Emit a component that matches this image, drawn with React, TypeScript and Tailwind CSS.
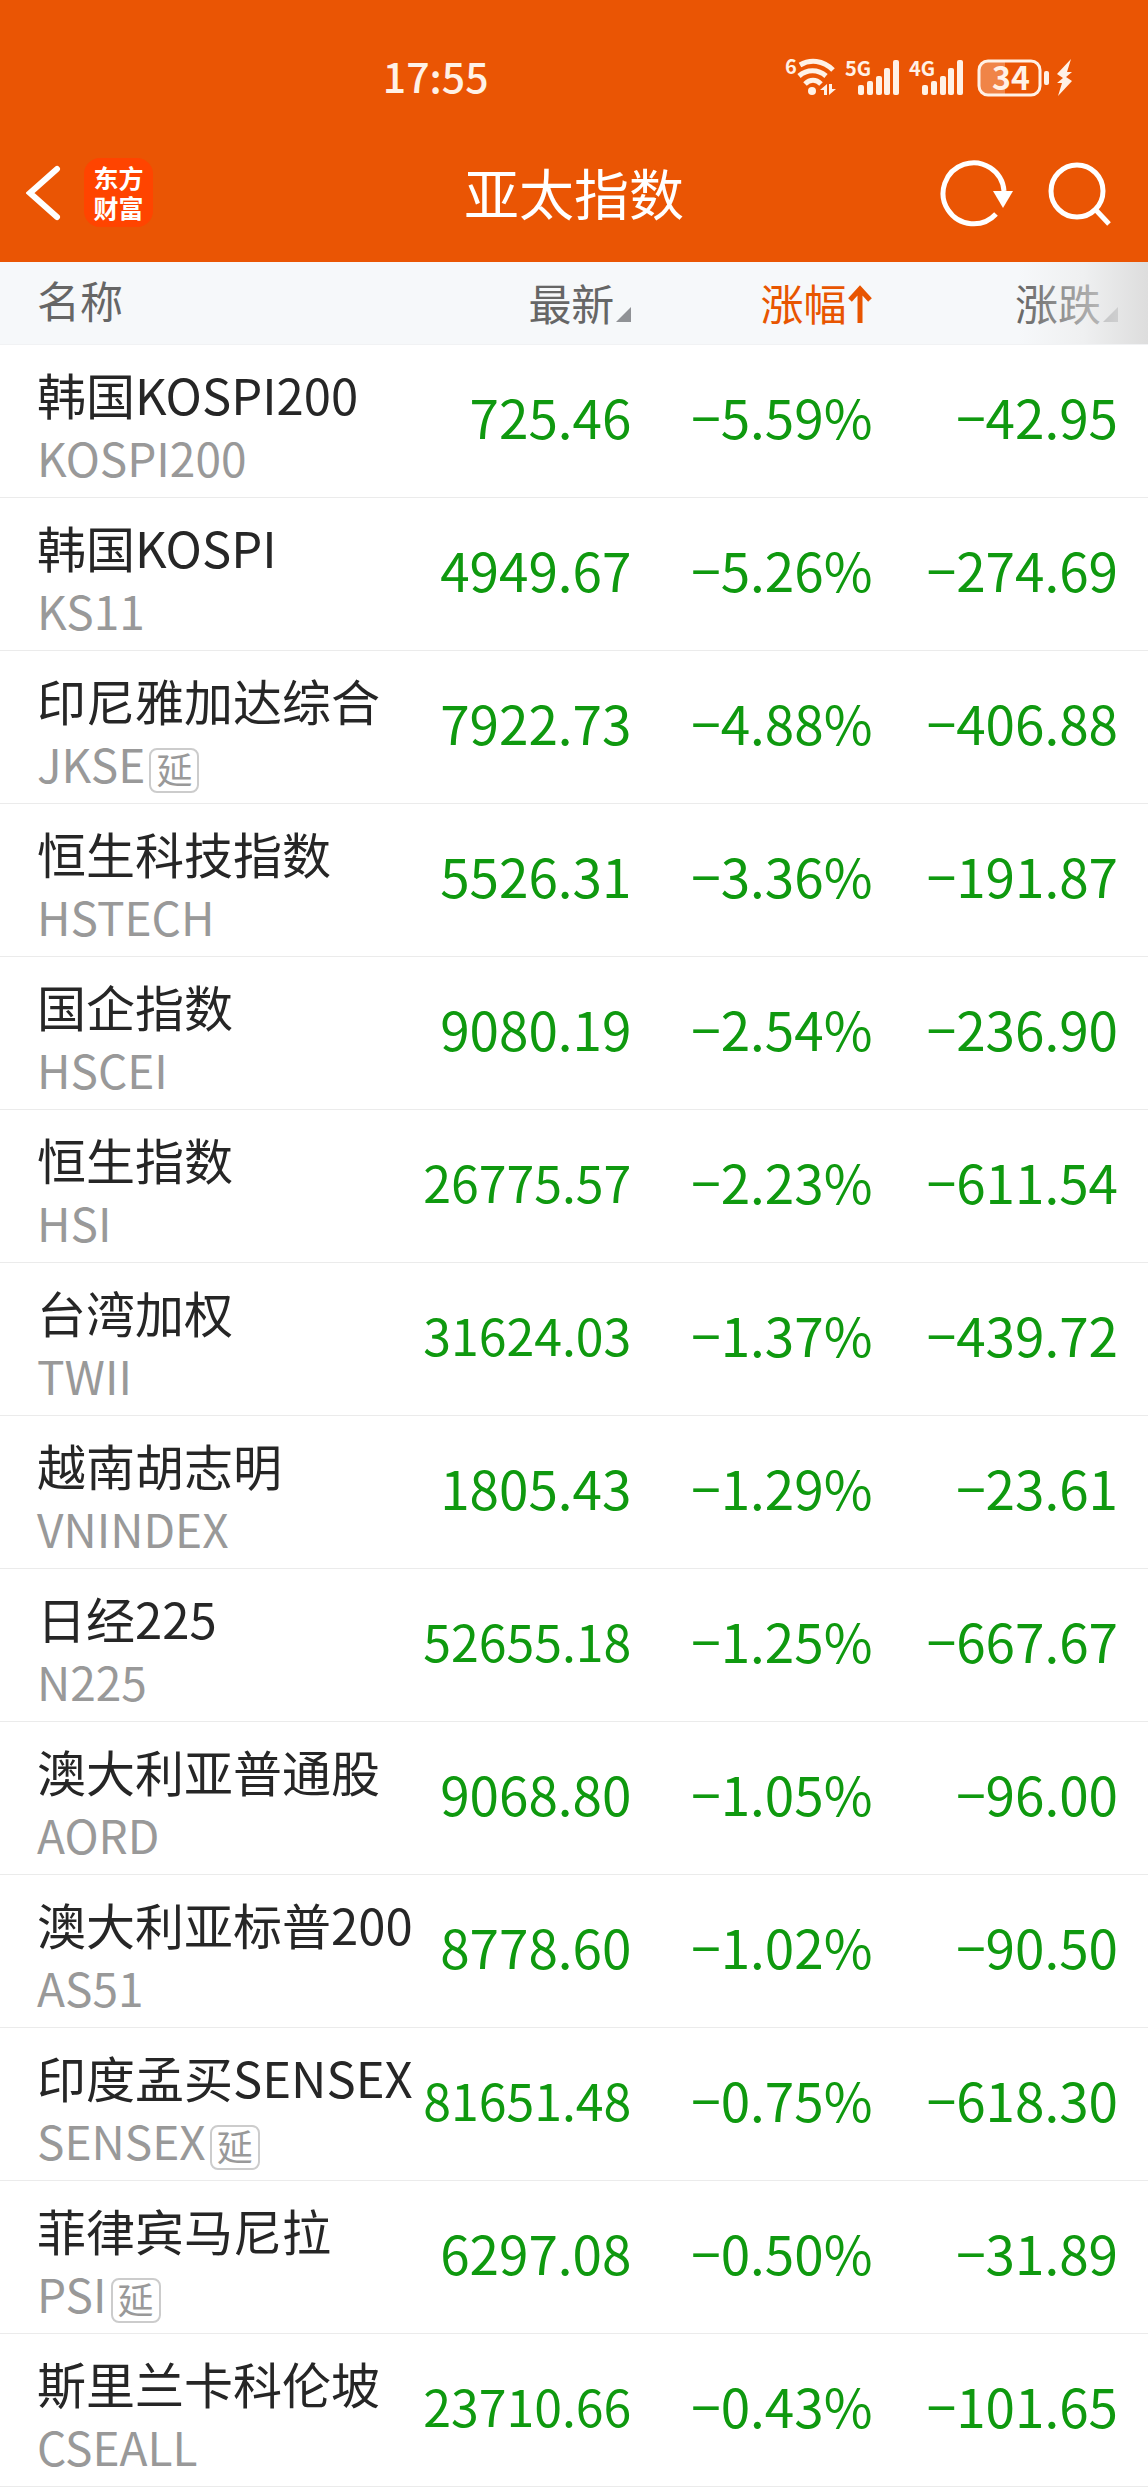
interface IndexRow {
  name: string;
  code: string;
  latest: string;
  percent: string;
  change: string;
  delayed?: boolean;
}

const rows: IndexRow[] = [
  { name: '韩国KOSPI200', code: 'KOSPI200', latest: '725.46', percent: '−5.59%', change: '−42.95' },
  { name: '韩国KOSPI', code: 'KS11', latest: '4949.67', percent: '−5.26%', change: '−274.69' },
  { name: '印尼雅加达综合', code: 'JKSE', latest: '7922.73', percent: '−4.88%', change: '−406.88', delayed: true },
  { name: '恒生科技指数', code: 'HSTECH', latest: '5526.31', percent: '−3.36%', change: '−191.87' },
  { name: '国企指数', code: 'HSCEI', latest: '9080.19', percent: '−2.54%', change: '−236.90' },
  { name: '恒生指数', code: 'HSI', latest: '26775.57', percent: '−2.23%', change: '−611.54' },
  { name: '台湾加权', code: 'TWII', latest: '31624.03', percent: '−1.37%', change: '−439.72' },
  { name: '越南胡志明', code: 'VNINDEX', latest: '1805.43', percent: '−1.29%', change: '−23.61' },
  { name: '日经225', code: 'N225', latest: '52655.18', percent: '−1.25%', change: '−667.67' },
  { name: '澳大利亚普通股', code: 'AORD', latest: '9068.80', percent: '−1.05%', change: '−96.00' },
  { name: '澳大利亚标普200', code: 'AS51', latest: '8778.60', percent: '−1.02%', change: '−90.50' },
  { name: '印度孟买SENSEX', code: 'SENSEX', latest: '81651.48', percent: '−0.75%', change: '−618.30', delayed: true },
  { name: '菲律宾马尼拉', code: 'PSI', latest: '6297.08', percent: '−0.50%', change: '−31.89', delayed: true },
  { name: '斯里兰卡科伦坡', code: 'CSEALL', latest: '23710.66', percent: '−0.43%', change: '−101.65' },
];

const WifiIcon = () => (
  <svg width="52" height="40" viewBox="0 0 52 40" fill="none" stroke="currentColor" className="overflow-visible">
    <text x="0" y="16" fontSize="20" fontWeight="700" fill="currentColor" stroke="none">6</text>
    <path d="M15 7C25 1 38 2 48 12" strokeWidth="5" />
    <path d="M14 18C22 11 33 11 41 18" strokeWidth="5" />
    <path d="M20 26C25 21 31 21 36 26" strokeWidth="5" />
    <circle cx="27" cy="33" r="4" fill="currentColor" stroke="none" />
    <path d="M42 26v11h-3v-5h-4zM44 37V26h3v5h4z" fill="currentColor" stroke="none" />
  </svg>
);

const SignalIcon = ({ label }: { label: string }) => (
  <svg width="56" height="40" viewBox="0 0 56 40" fill="currentColor" className="overflow-visible">
    <text x="0" y="18" fontSize="20" fontWeight="700">{label}</text>
    <rect x="13" y="27" width="6" height="10" rx="2" />
    <rect x="22" y="23" width="6" height="14" rx="2" />
    <rect x="31" y="18" width="6" height="19" rx="2" />
    <rect x="39" y="10" width="6" height="27" rx="2" />
    <rect x="48" y="2" width="6" height="35" rx="2" />
  </svg>
);

const BatteryIcon = () => (
  <svg width="99" height="40" viewBox="0 0 99 40" fill="currentColor" className="overflow-visible">
    <path d="M14 4h18v32H14a8 8 0 0 1-8-8V12a8 8 0 0 1 8-8z" opacity="0.3" />
    <rect x="6" y="3" width="61" height="34" rx="9" fill="none" stroke="currentColor" strokeWidth="3" />
    <rect x="71" y="13" width="5" height="14" rx="2" />
    <text x="19" y="32" fontSize="32" fontWeight="700">34</text>
    <path d="M98 1L84 16l6 4-6 5h5l-4 13 14-15-6-4 6-5h-5z" />
  </svg>
);

const BackIcon = () => (
  <svg width="36" height="60" viewBox="0 0 36 60" fill="none" stroke="currentColor" strokeWidth="6" strokeLinecap="round">
    <path d="M31 5L4 29L31 53" />
  </svg>
);

const RefreshIcon = () => (
  <svg width="76" height="70" viewBox="0 0 76 70" fill="none" stroke="currentColor" strokeWidth="5">
    <path d="M56 55A30.500 30.500 0 1 1 64 32" />
    <path d="M53 32h20L63 49z" fill="currentColor" stroke="none" />
  </svg>
);

const SearchIcon = () => (
  <svg width="64" height="66" viewBox="0 0 64 66" fill="none" stroke="currentColor" strokeWidth="5">
    <circle cx="29" cy="30" r="26" />
    <path d="M47 48L61 63" />
  </svg>
);

const SortCorner = () => (
  <svg width="15" height="15" viewBox="0 0 15 15" className="text-[#909296]">
    <path d="M15 0V15H0z" fill="currentColor" />
  </svg>
);

const SortUpArrow = () => (
  <svg width="24" height="42" viewBox="0 0 24 42" fill="none" stroke="currentColor" strokeWidth="5">
    <path d="M12 42V8M2 19L12 8L22 19" />
  </svg>
);

const StatusBar = () => (
  <div className="flex items-center justify-between h-[126px] pt-[30px] pl-[33%] pr-[76px] text-[#fff1e6]">
    <span className="ml-1 pb-1.5 text-[41px] leading-[60px] font-medium">17:55</span>
    <div className="flex items-center gap-2">
      <WifiIcon />
      <SignalIcon label="5G" />
      <SignalIcon label="4G" />
      <BatteryIcon />
    </div>
  </div>
);

const NavBar = () => (
  <div className="grid grid-cols-[1fr_auto_1fr] items-center h-[136px] px-[26px] text-white">
    <div className="flex items-center gap-[22px]">
      <button type="button" aria-label="返回">
        <BackIcon />
      </button>
      <a href="#home" className="w-[69px] h-[69px] mb-1 pt-1 rounded-2xl bg-[#ff4400] text-center text-[25px] leading-[30px] font-bold">
        东方
        <br />
        财富
      </a>
    </div>
    <h1 className="pb-1.5 text-[55px] leading-[80px]">亚太指数</h1>
    <div className="flex items-center justify-end gap-8 pr-2.5">
      <button type="button" aria-label="刷新">
        <RefreshIcon />
      </button>
      <button type="button" aria-label="搜索">
        <SearchIcon />
      </button>
    </div>
  </div>
);

const TableHead = () => (
  <thead>
    <tr className="h-[82px] bg-[#f6f8fa] border-b border-[#f1f2f4] text-[43px] leading-[60px] text-[#666666]">
      <th scope="col" className="w-[36%] pl-[37px] pb-2 text-left font-normal">名称</th>
      <th scope="col" className="w-[19%] pb-0.5 font-normal">
        <button type="button" className="flex items-end gap-0.5 ml-auto">
          最新
          <span className="pb-2.5"><SortCorner /></span>
        </button>
      </th>
      <th scope="col" aria-sort="ascending" className="w-[21%] pb-0.5 font-normal text-[#e85500]">
        <button type="button" className="flex items-center gap-0.5 ml-auto">
          涨幅
          <SortUpArrow />
        </button>
      </th>
      <th scope="col" className="relative w-[24%] pr-[30px] pb-0.5 font-normal">
        <button type="button" className="flex items-end gap-0.5 ml-auto">
          涨跌
          <span className="pb-2.5"><SortCorner /></span>
        </button>
        <span className="absolute inset-y-0 right-0 w-[130px] pointer-events-none bg-linear-to-r from-[#f6f8fa]/0 via-[#e8e8e8]/50 to-[#dddddd]" />
      </th>
    </tr>
  </thead>
);

const TableRow = ({ name, code, latest, percent, change, delayed }: IndexRow) => (
  <tr className="border-b border-[#ebebeb] text-right text-[53px] text-[#0f990f] whitespace-nowrap">
    <th scope="row" className="pl-[37px] pt-4 pb-2.5 text-left font-normal">
      <div className="text-[49px] leading-[66px] text-[#262626]">{name}</div>
      <div className="flex items-end gap-1 text-[46px] leading-[60px] text-[#999999]">
        {code}
        {delayed && (
          <span className="flex items-center justify-center w-[50px] h-[45px] pb-1 border-2 border-[#cccccc] rounded-lg text-[36px] leading-[40px]">
            延
          </span>
        )}
      </div>
    </th>
    <td className={latest.length > 7 ? 'pb-2 text-[50px]' : 'pb-2'}>{latest}</td>
    <td className="pb-2">{percent}</td>
    <td className="pb-2 pr-[30px]">{change}</td>
  </tr>
);

const App = () => {
  return (
    <div className="min-h-screen bg-white font-['Noto_Sans_CJK_SC',sans-serif]" lang="zh-CN">
      <header className="bg-[#ea5504]">
        <StatusBar />
        <NavBar />
      </header>
      <table className="w-full table-fixed border-collapse">
        <TableHead />
        <tbody>
          {rows.map((row) => (
            <TableRow key={row.code} {...row} />
          ))}
        </tbody>
      </table>
    </div>
  );
};

export default App;
